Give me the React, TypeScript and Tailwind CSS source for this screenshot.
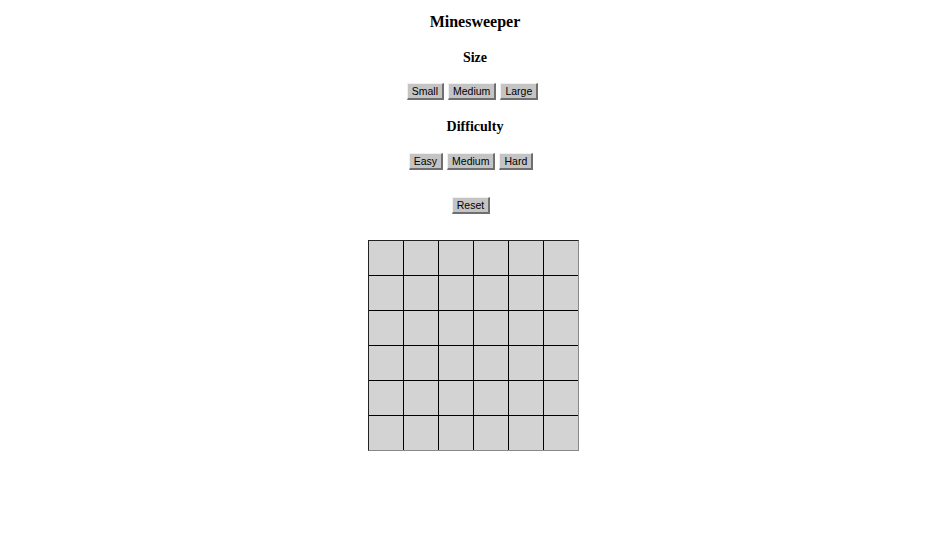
import React from "react";

const Btn = ({ label }: { label: string }) => (
  <button className="h-[17px] px-[4px] bg-[#c4c4c4] text-[10.5px] leading-none text-black border-t border-l border-t-[#f0f0f0] border-l-[#f0f0f0] border-r-2 border-b-2 border-r-[#6f6f6f] border-b-[#6f6f6f] font-['Liberation_Sans',Arial,sans-serif]">
    {label}
  </button>
);

const App = () => {
  const cells = Array.from({ length: 36 });
  return (
    <div className="w-full min-h-[550px] bg-white flex flex-col items-center pt-[12px] font-['Liberation_Serif','Times_New_Roman',serif] text-black">
      <h1 className="text-[16px] leading-[20px] font-bold">Minesweeper</h1>
      <h2 className="mt-[16px] text-[14px] leading-[20px] font-bold">Size</h2>
      <div className="mt-[15px] flex gap-[4px] mr-[5px]">
        <Btn label="Small" />
        <Btn label="Medium" />
        <Btn label="Large" />
      </div>
      <h2 className="mt-[17px] text-[14px] leading-[20px] font-bold">Difficulty</h2>
      <div className="mt-[16px] flex gap-[4px] mr-[8px]">
        <Btn label="Easy" />
        <Btn label="Medium" />
        <Btn label="Hard" />
      </div>
      <div className="mt-[22px] mr-[8px]">
        <Btn label="Reset" />
      </div>
      <div className="mt-[24px] mr-[4px] border-l border-t border-[#222] border-r border-b border-r-[#888] border-b-[#888]">
        <div className="grid grid-cols-[repeat(6,34px)] grid-rows-[repeat(6,34px)] gap-px bg-black">
          {cells.map((_, i) => (
            <div key={i} className="bg-[#d3d3d3]" />
          ))}
        </div>
      </div>
    </div>
  );
};

export default App;
